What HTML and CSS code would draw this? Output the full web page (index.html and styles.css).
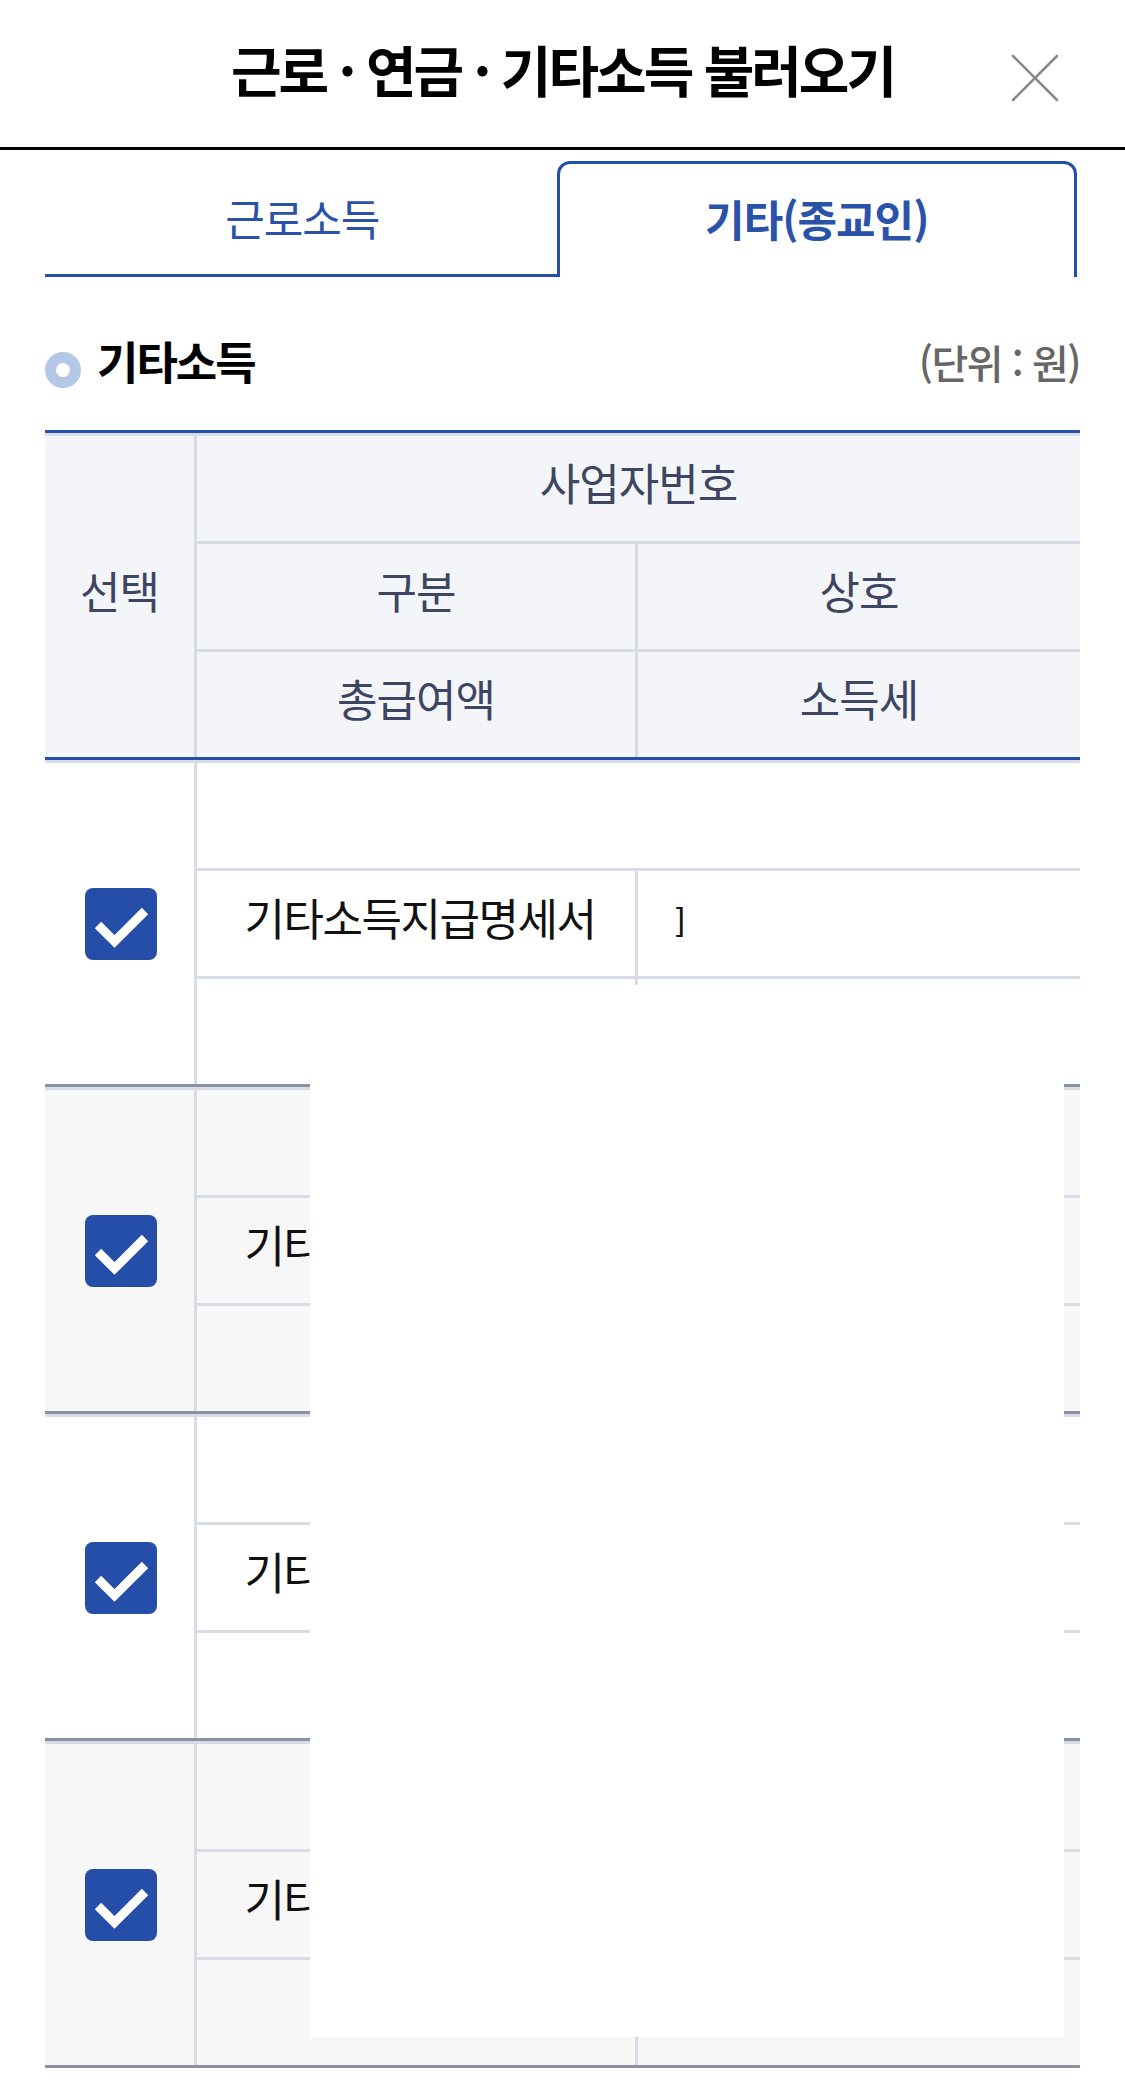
FILE: index.html
```html
<!DOCTYPE html>
<html lang="ko">
<head>
<meta charset="utf-8">
<title>근로 · 연금 · 기타소득 불러오기</title>
<link rel="stylesheet" href="styles.css">
</head>
<body>
<div class="page">
  <header class="top">
    <div class="top-side"></div>
    <h1 class="title">근로 · 연금 · 기타소득 불러오기</h1>
    <div class="top-side right">
      <button class="close" aria-label="닫기">
        <svg width="48" height="48" viewBox="0 0 48 48"><path d="M2 2 L46 46 M46 2 L2 46" stroke="#8a8a8c" stroke-width="2.6" stroke-linecap="round" fill="none"/></svg>
      </button>
    </div>
  </header>

  <nav class="tabs">
    <div class="tab">근로소득</div>
    <div class="tab active">기타(종교인)</div>
  </nav>

  <div class="section-head">
    <span class="dot"></span>
    <h2 class="section-title">기타소득</h2>
    <span class="unit">(단위 : 원)</span>
  </div>

  <div class="table">
    <div class="grid thead">
      <div class="cell sel">선택</div>
      <div class="cell wide">사업자번호</div>
      <div class="cell">구분</div>
      <div class="cell">상호</div>
      <div class="cell">총급여액</div>
      <div class="cell">소득세</div>
    </div>

    <div class="grid group">
      <div class="cell sel"><span class="chk"><svg width="72" height="72" viewBox="0 0 72 72"><rect width="72" height="72" rx="8" fill="#244ea8"/><path d="M13 37 L29.5 53.5 L60 23" stroke="#fff" stroke-width="9" fill="none"/></svg></span></div>
      <div class="cell wide"></div>
      <div class="cell data name">기타소득지급명세서</div>
      <div class="cell data left"><span class="frag">]</span></div>
      <div class="cell"></div>
      <div class="cell"></div>
    </div>

    <div class="grid group alt">
      <div class="cell sel"><span class="chk"><svg width="72" height="72" viewBox="0 0 72 72"><rect width="72" height="72" rx="8" fill="#244ea8"/><path d="M13 37 L29.5 53.5 L60 23" stroke="#fff" stroke-width="9" fill="none"/></svg></span></div>
      <div class="cell wide"></div>
      <div class="cell data name">기타소득지급명세서</div>
      <div class="cell data"></div>
      <div class="cell"></div>
      <div class="cell"></div>
    </div>

    <div class="grid group">
      <div class="cell sel"><span class="chk"><svg width="72" height="72" viewBox="0 0 72 72"><rect width="72" height="72" rx="8" fill="#244ea8"/><path d="M13 37 L29.5 53.5 L60 23" stroke="#fff" stroke-width="9" fill="none"/></svg></span></div>
      <div class="cell wide"></div>
      <div class="cell data name">기타소득지급명세서</div>
      <div class="cell data"></div>
      <div class="cell"></div>
      <div class="cell"></div>
    </div>

    <div class="grid group alt">
      <div class="cell sel"><span class="chk"><svg width="72" height="72" viewBox="0 0 72 72"><rect width="72" height="72" rx="8" fill="#244ea8"/><path d="M13 37 L29.5 53.5 L60 23" stroke="#fff" stroke-width="9" fill="none"/></svg></span></div>
      <div class="cell wide"></div>
      <div class="cell data name">기타소득지급명세서</div>
      <div class="cell data"></div>
      <div class="cell"></div>
      <div class="cell"></div>
    </div>
  </div>

  <div class="mask"></div>
</div>
</body>
</html>
```

FILE: styles.css
```css
* { box-sizing: border-box; }

html, body {
  margin: 0;
  padding: 0;
  background: #fff;
}

body {
  font-family: "Noto Sans CJK KR", "Noto Sans", sans-serif;
  color: #111;
}

.page {
  position: relative;
  width: 1125px;
  min-height: 2097px;
}

/* header */
.top {
  display: grid;
  grid-template-columns: 1fr auto 1fr;
  align-items: center;
  height: 150px;
  border-bottom: 3px solid #000;
}

.title {
  margin: 0;
  font-size: 55px;
  font-weight: 700;
  letter-spacing: -3px;
  color: #000;
  line-height: 1;
  padding-bottom: 10px;
}

.top-side.right {
  display: flex;
  justify-content: flex-end;
  padding-right: 66px;
  padding-top: 8px;
}

.close {
  border: 0;
  background: none;
  padding: 0;
  width: 48px;
  height: 48px;
  display: block;
}

.close svg { display: block; }

/* tabs */
.tabs {
  display: flex;
  margin: 11px 45px 0;
  height: 116px;
}

.tab {
  flex: 1 1 0;
  display: flex;
  align-items: center;
  justify-content: center;
  font-size: 43px;
  letter-spacing: -1px;
  color: #2a52a8;
  border-bottom: 3px solid #2450a8;
  padding-bottom: 2px;
}

.tab.active {
  border: 3px solid #2450a8;
  border-bottom: 0;
  border-radius: 13px 13px 0 0;
  margin: 0 3px 0 -3px;
  font-weight: 700;
  padding-bottom: 6px;
}

/* section head */
.section-head {
  display: flex;
  align-items: center;
  margin: 59px 45px 0;
  height: 60px;
}

.dot {
  width: 36px;
  height: 36px;
  border-radius: 50%;
  border: 11px solid #b4c7e7;
  margin-right: 16px;
  margin-top: 8px;
}

.section-title {
  margin: 0 0 12px;
  font-size: 45px;
  font-weight: 700;
  letter-spacing: -2px;
  color: #000;
  line-height: 1;
}

.unit {
  margin-left: auto;
  margin-bottom: 8px;
  font-size: 40px;
  font-weight: 500;
  letter-spacing: -1.5px;
  color: #666;
  line-height: 1;
}

/* table */
.table {
  margin: 34px 45px 0;
}

.grid {
  display: grid;
  grid-template-columns: 149px 438px 1fr;
  grid-template-rows: repeat(3, 105px);
  gap: 3px;
  padding-top: 3px;
  background: #d8dce7;
}

.thead {
  border-top: 3px solid #2450a8;
  border-bottom: 3px solid #2450a8;
}

.group {
  border-bottom: 3px solid #8b91a1;
}

.cell {
  display: flex;
  align-items: center;
  justify-content: center;
  background: #fff;
  font-size: 44px;
  letter-spacing: -1px;
  line-height: 1;
  padding-bottom: 14px;
}

.thead .cell {
  background: #f4f5f9;
  color: #3d4562;
}

.group.alt .cell {
  background: #f7f7f7;
}

.cell.sel {
  grid-row: 1 / 4;
}

.group .cell.sel {
  padding-bottom: 0;
}

.cell.wide {
  grid-column: 2 / 4;
}

.cell.data {
  color: #111;
}

.cell.name {
  letter-spacing: -1.5px;
  padding-left: 8px;
}

.cell.left {
  justify-content: flex-start;
  padding-left: 38px;
}

.frag {
  font-family: "Liberation Sans", sans-serif;
  font-size: 32px;
  font-weight: 300;
  color: #111;
  margin-top: 4px;
}

.chk {
  display: block;
  width: 72px;
  height: 72px;
  margin-left: 3px;
}

.chk svg { display: block; }

/* privacy mask over the table body */
.mask {
  position: absolute;
  left: 310px;
  top: 985px;
  width: 754px;
  height: 1052px;
  background: #fff;
}
```
